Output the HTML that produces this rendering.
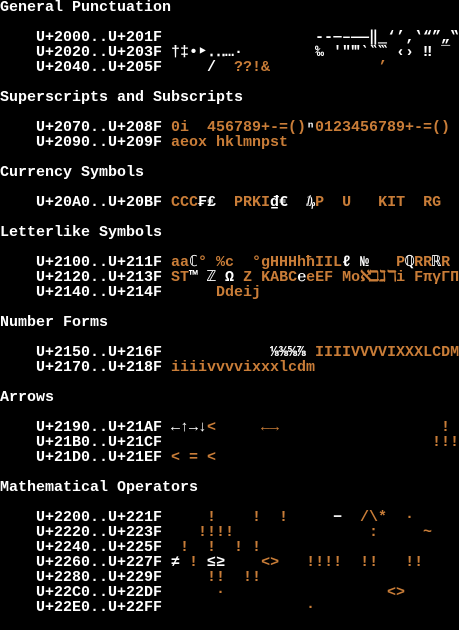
<!DOCTYPE html>
<html><head><meta charset="utf-8"><style>
html,body{margin:0;padding:0;background:#000;width:459px;height:630px;overflow:hidden}
.r{position:absolute;left:0;height:15px;line-height:15px;white-space:pre;font-family:"Liberation Mono","DejaVu Sans Mono",monospace;font-size:15px;font-weight:bold;color:#fff}
.g{left:171px}
i{display:inline-block;width:9px;font-style:normal;text-align:center;overflow:visible;vertical-align:top}
.o{color:#c97d38}
.w{color:#fff}
</style></head><body>
<div class="r" style="top:0">General Punctuation</div>
<div class="r" style="top:30px">    U+2000..U+201F</div>
<div class="r g" style="top:30px">                <i>‐</i><i>‑</i><i>‒</i><i>–</i><i>—</i><i>―</i><i>‖</i><i>‗</i><i>‘</i><i>’</i><i>‚</i><i>‛</i><i>“</i><i>”</i><i>„</i><i>‟</i></div>
<div class="r" style="top:45px">    U+2020..U+203F</div>
<div class="r g" style="top:45px"><i>†</i><i>‡</i><i>•</i><i>‣</i><i>․</i><i>‥</i><i>…</i><i>·</i>        <i>‰</i> <i>′</i><i>″</i><i>‴</i><i>‵</i><i>‶</i><i>‷</i> <i>‹</i><i>›</i> <i>‼</i> <i>‾</i></div>
<div class="r" style="top:60px">    U+2040..U+205F</div>
<div class="r g" style="top:60px">    /  <span class="o">??!&amp;</span>            <span class="o"><i>’</i></span></div>

<div class="r" style="top:90px">Superscripts and Subscripts</div>
<div class="r" style="top:120px">    U+2070..U+208F</div>
<div class="r g" style="top:120px"><span class="o">0i  456789+-=()</span><i>ⁿ</i><span class="o">0123456789+-=()</span></div>
<div class="r" style="top:135px">    U+2090..U+209F</div>
<div class="r g" style="top:135px"><span class="o">aeox hklmnpst</span></div>

<div class="r" style="top:165px">Currency Symbols</div>
<div class="r" style="top:195px">    U+20A0..U+20BF</div>
<div class="r g" style="top:195px"><span class="o">CCC</span><i>₣</i><i>₤</i>  <span class="o">PRKI</span><i>₫</i><i>€</i>  <i>₯</i><span class="o">P  U   KIT  RG</span></div>

<div class="r" style="top:225px">Letterlike Symbols</div>
<div class="r" style="top:255px">    U+2100..U+211F</div>
<div class="r g" style="top:255px"><span class="o">aa</span><i>ℂ</i><span class="o"><i>°</i> %c  <i>°</i>gHHHh<i>ħ</i>IIL</span><i>ℓ</i> <i>№</i>   <span class="o">P</span><i>ℚ</i><span class="o">RR</span><i>ℝ</i><span class="o">R</span></div>
<div class="r" style="top:270px">    U+2120..U+213F</div>
<div class="r g" style="top:270px"><span class="o">ST</span><i>™</i> <i>ℤ</i> <i>Ω</i> <span class="o">Z KABC</span><i>℮</i><span class="o">eEF Mo<i>ℵ</i><i>ℶ</i><i>ℷ</i><i>ℸ</i>i F<i>π</i><i>γ</i><i>Γ</i><i>Π</i></span></div>
<div class="r" style="top:285px">    U+2140..U+214F</div>
<div class="r g" style="top:285px">     <span class="o">Ddeij</span></div>

<div class="r" style="top:315px">Number Forms</div>
<div class="r" style="top:345px">    U+2150..U+216F</div>
<div class="r g" style="top:345px">           <i>⅛</i><i>⅜</i><i>⅝</i><i>⅞</i> <span class="o">IIIIVVVVIXXXLCDM</span></div>
<div class="r" style="top:360px">    U+2170..U+218F</div>
<div class="r g" style="top:360px"><span class="o">iiiivvvvixxxlcdm</span></div>

<div class="r" style="top:390px">Arrows</div>
<div class="r" style="top:420px">    U+2190..U+21AF</div>
<div class="r g" style="top:420px"><i>←</i><i>↑</i><i>→</i><i>↓</i><span class="o">&lt;     <i>←</i><i>→</i>                  !</span></div>
<div class="r" style="top:435px">    U+21B0..U+21CF</div>
<div class="r g" style="top:435px"><span class="o">                             !!!</span></div>
<div class="r" style="top:450px">    U+21D0..U+21EF</div>
<div class="r g" style="top:450px"><span class="o">&lt; = &lt;</span></div>

<div class="r" style="top:480px">Mathematical Operators</div>
<div class="r" style="top:510px">    U+2200..U+221F</div>
<div class="r g" style="top:510px"><span class="o">    !    !  !     </span><i>−</i><span class="o">  /\*  ·</span></div>
<div class="r" style="top:525px">    U+2220..U+223F</div>
<div class="r g" style="top:525px"><span class="o">   !!!!               :     ~</span></div>
<div class="r" style="top:540px">    U+2240..U+225F</div>
<div class="r g" style="top:540px"><span class="o"> !  !  ! !</span></div>
<div class="r" style="top:555px">    U+2260..U+227F</div>
<div class="r g" style="top:555px"><i>≠</i> <span class="o">!</span> <i>≤</i><i>≥</i>    <span class="o">&lt;&gt;   !!!!  !!   !!</span></div>
<div class="r" style="top:570px">    U+2280..U+229F</div>
<div class="r g" style="top:570px"><span class="o">    !!  !!</span></div>
<div class="r" style="top:585px">    U+22C0..U+22DF</div>
<div class="r g" style="top:585px"><span class="o">     ·                  &lt;&gt;</span></div>
<div class="r" style="top:600px">    U+22E0..U+22FF</div>
<div class="r g" style="top:600px"><span class="o">               ·</span></div>
</body></html>
